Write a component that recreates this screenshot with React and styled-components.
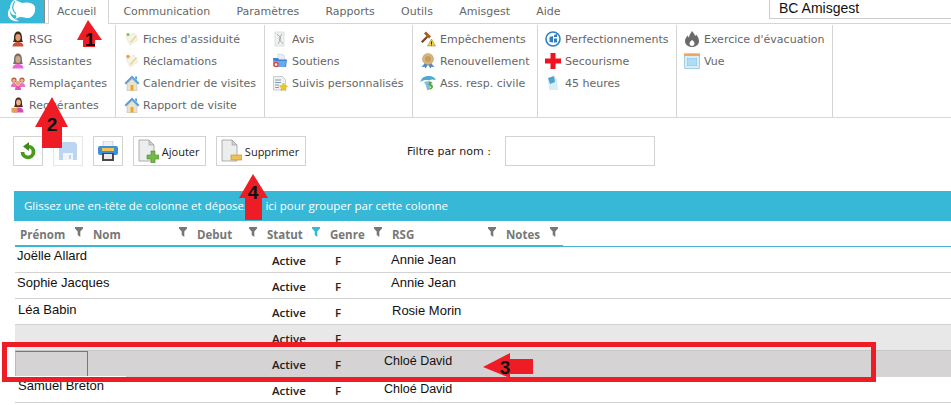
import React from 'react';
import styled, { createGlobalStyle } from 'styled-components';

const GlobalStyle = createGlobalStyle`
  html, body {
    margin: 0;
    padding: 0;
    background: #fff;
  }
`;

const Page = styled.div`
  position: relative;
  width: 951px;
  height: 405px;
  overflow: hidden;
  font-family: "DejaVu Sans", Verdana, sans-serif;
`;

const TabBar = styled.div`
  display: flex;
  height: 23px;
  border-bottom: 1px solid #d4d4d4;
`;

const Logo = styled.div`
  width: 45px;
  height: 23px;
  background: #37b8d6;
  margin-right: 3px;
  border-right: 1px solid #888;
  box-sizing: border-box;
  overflow: hidden;
`;

const Tab = styled.div`
  padding: ${props => (props.$active ? '0 12px 0 8px' : '0 13.15px')};
  height: ${props => (props.$active ? '24px' : '23px')};
  line-height: 23px;
  font-size: 11px;
  color: #666;
  background: #fff;
  margin-right: ${props => (props.$active ? '1px' : '0')};
  border-left: ${props => (props.$active ? '1px solid #d4d4d4' : 'none')};
  border-right: ${props => (props.$active ? '1px solid #d4d4d4' : 'none')};
  white-space: nowrap;
`;

const Account = styled.div`
  margin-left: auto;
  width: 182px;
  height: 19px;
  box-sizing: border-box;
  padding-left: 9px;
  border-left: 1px solid #ccc;
  border-bottom: 1px solid #ccc;
  font-family: "Liberation Sans", Arial, sans-serif;
  font-size: 14px;
  line-height: 17px;
  color: #111;
`;

const Ribbon = styled.div`
  display: flex;
  height: 94px;
  box-sizing: border-box;
  padding-top: 1px;
  border-bottom: 1px solid #d8d8d8;
`;

const RibbonGroup = styled.div`
  width: ${props => props.$width}px;
  box-sizing: border-box;
  padding: 3px 0 0 ${props => props.$pad}px;
  border-right: 1px solid #d4d4d4;
`;

const RibbonItem = styled.div`
  display: flex;
  align-items: center;
  height: 22px;
  font-size: 11px;
  color: #666;
  white-space: nowrap;
`;

const IconSlot = styled.span`
  display: flex;
  width: ${props => props.$width || 20}px;
  flex: none;
`;

const Toolbar = styled.div`
  display: flex;
  align-items: center;
  height: 30px;
  margin-top: 18px;
  padding-left: 13px;
`;

const ToolButton = styled.div`
  display: flex;
  align-items: center;
  justify-content: ${props => (props.$label ? 'flex-start' : 'center')};
  width: ${props => props.$width}px;
  height: 30px;
  box-sizing: border-box;
  margin-right: ${props => props.$gap}px;
  padding-left: ${props => (props.$label ? '4px' : '0')};
  border: 1px solid ${props => (props.$disabled ? '#e6e6e6' : '#d2d2d2')};
  font-family: "Open Sans", sans-serif;
  font-size: 11px;
  color: #222;
`;

const FilterLabel = styled.label`
  margin-left: 101px;
  width: 98px;
  font-size: 11px;
  color: #222;
  white-space: nowrap;
`;

const FilterInput = styled.div`
  width: 150px;
  height: 30px;
  box-sizing: border-box;
  border: 1px solid #d2d2d2;
`;

const GroupBar = styled.div`
  margin: 25px 0 0 14px;
  height: 30px;
  padding-left: 10px;
  background: #37b8d6;
  color: #fff;
  font-family: "Open Sans", sans-serif;
  font-size: 11.5px;
  line-height: 30px;
  white-space: nowrap;
`;

const HeaderRow = styled.div`
  display: grid;
  grid-template-columns: 73px 104px 70px 63px 62px 114px 62px 1fr;
  margin-left: 15px;
  height: 25px;
  border-bottom: 1px solid #45b1cc;
  position: relative;
  &::after {
    content: '';
    position: absolute;
    left: 0;
    bottom: -1px;
    width: 548px;
    height: 2px;
    background: #37b8d6;
  }
`;

const HeaderCell = styled.div`
  display: flex;
  align-items: center;
  justify-content: space-between;
  padding: 1px 5px 0 5px;
  font-family: "Open Sans", sans-serif;
  font-weight: 700;
  font-size: 11.5px;
  color: #777;
  white-space: nowrap;
  svg {
    margin-bottom: 4px;
  }
`;

const Row = styled.div`
  display: grid;
  grid-template-columns: 73px 104px 70px 63px 58px 1fr;
  margin-left: 15px;
  height: 26px;
  box-sizing: border-box;
  border-bottom: ${props => (props.$open ? 'none' : `1px solid ${props.$line || '#d2d2d2'}`)};
  background: ${props => props.$bg || '#fff'};
  font-family: "Liberation Sans", Arial, sans-serif;
  font-size: 13px;
  color: #111;
`;

const NameCell = styled.div`
  padding: ${props => props.$top}px 0 0 ${props => props.$left}px;
  line-height: 15px;
  font-size: ${props => (props.$small ? '12.5px' : '13px')};
  white-space: nowrap;
`;

const StatusCell = styled.div`
  padding: 6px 0 0 10px;
  line-height: 15px;
  font-family: "Open Sans", sans-serif;
  font-weight: 600;
  font-size: 11.5px;
  color: #222;
`;

const EditBox = styled.div`
  position: absolute;
  left: 15px;
  top: 351px;
  width: 73px;
  height: 25px;
  box-sizing: border-box;
  border-top: 1px solid #777;
  border-right: 1px solid #777;
  border-left: 1px solid #bbb;
`;

const EditUnderline = styled.div`
  position: absolute;
  left: 15px;
  top: 376px;
  width: 111px;
  height: 1px;
  background: #fff;
`;

const Highlight = styled.div`
  position: absolute;
  left: 2px;
  top: 342px;
  width: 874px;
  height: 40px;
  box-sizing: border-box;
  border: 5px solid #ee1c25;
`;

const Callout = styled.svg`
  position: absolute;
  left: 0;
  top: 0;
  width: 951px;
  height: 405px;
  pointer-events: none;
  text {
    font-family: "Liberation Sans", Arial, sans-serif;
    font-weight: 700;
    font-size: 19px;
    fill: #111;
    text-anchor: middle;
  }
`;

const Svg = ({ size = 16, children }) => (
  <svg width={size} height={size} viewBox="0 0 16 16">{children}</svg>
);

const Woman = ({ hair, skin, body }) => (
  <Svg>
    <path d="M4 7C4 2 6 .5 8 .5S12 2 12 7c0 2 .5 3 1 4H3c.5-1 1-2 1-4z" fill={hair} />
    <ellipse cx="8" cy="6.5" rx="2.6" ry="3.4" fill={skin} />
    <path d="M2.5 15.5c0-3 2-4.5 5.5-4.5s5.500 1.500 5.500 4.500z" fill={body} />
  </Svg>
);

const Group = () => (
  <Svg>
    <circle cx="4" cy="5" r="2.6" fill="#a8583c" />
    <circle cx="12" cy="5" r="2.600" fill="#a8583c" />
    <circle cx="4" cy="5.400" r="1.700" fill="#f2b48c" />
    <circle cx="12" cy="5.400" r="1.700" fill="#f2b48c" />
    <path d="M1 12c0-3 1-4 3-4s3 1 3 4zM9 12c0-3 1-4 3-4s3 1 3 4z" fill="#ee6fc0" />
    <circle cx="8" cy="8" r="2.200" fill="#e9a77e" />
    <path d="M5 15c0-3 1-4.500 3-4.500s3 1.500 3 4.500z" fill="#e455b0" />
  </Svg>
);

const Requester = () => (
  <Svg>
    <path d="M5 6c0-4 1.500-5.500 3.500-5.500S12 2 12 6c0 2 .5 3 1 4H4c.5-1 1-2 1-4z" fill="#4a2c20" />
    <ellipse cx="8.500" cy="5.500" rx="2.300" ry="3" fill="#f0b28a" />
    <path d="M3 15.500c0-3 2-5 5.500-5s5 2 5 5z" fill="#d94bb4" />
    <path d="M1.500 11h6v4.500h-6z" fill="#e8a050" />
  </Svg>
);

const Sheet = ({ mark, markColor }) => (
  <Svg>
    <path d="M2 6L10 2l4 7-8 5z" fill="#f4f3e6" stroke="#e4e2d2" strokeWidth=".6" />
    <path d="M6 11l6-7 1 1-6 7z" fill="#e8d28a" />
    <circle cx="4" cy="3.500" r={mark} fill={markColor} />
  </Svg>
);

const House = () => (
  <Svg>
    <path d="M8 .5L.5 8l1.500 1.500L8 3.500l6 6L15.500 8z" fill="#5b9fd8" />
    <path d="M3 9l5-5 5 5v6.500H3z" fill="#e9e4d2" stroke="#b9b19a" strokeWidth=".5" />
    <path d="M6.500 10h3v5.500h-3z" fill="#f0a81e" />
    <path d="M11 1.500h2v3.500l-2-2z" fill="#5b9fd8" />
  </Svg>
);

const Checklist = () => (
  <Svg>
    <path d="M3 1h9v14H3z" fill="#f1f1f1" stroke="#cfcfcf" strokeWidth=".6" />
    <path d="M5 3l4 4-3 6M10 3l-3 5 4 5" fill="none" stroke="#9aa7b0" strokeWidth=".9" />
  </Svg>
);

const Folder = () => (
  <Svg>
    <path d="M6 1l6 1 1 5H6z" fill="#e8eef5" stroke="#b9c7d6" strokeWidth=".5" />
    <path d="M1 5h5l1 1.500h8L14 14H2z" fill="#3f83d6" />
    <path d="M1 8h13l-1 6H2z" fill="#6aa9ea" />
    <circle cx="4" cy="11.500" r="2.700" fill="#e24b3b" />
    <circle cx="4" cy="11.500" r="1.200" fill="#fff" />
  </Svg>
);

const StarList = () => (
  <Svg>
    <path d="M1.500 1.500h9l3 3V15h-12z" fill="#eef0f2" stroke="#a9b1b9" strokeWidth=".6" />
    <path d="M3 5h6M3 7.500h6M3 10h4M3 12.500h4" stroke="#7f93a8" strokeWidth=".9" />
    <path d="M11.500 8l1.300 2.600 2.700.4-2 1.900.5 2.800-2.500-1.300L9 15.700l.5-2.800-2-1.900 2.700-.4z" fill="#f5c518" stroke="#c99a10" strokeWidth=".4" />
  </Svg>
);

const Gavel = () => (
  <Svg>
    <path d="M6 .5l5 5-2 2-5-5z" fill="#a85a28" />
    <path d="M6.500 5L1 10.500 2.500 12 8 6.500z" fill="#7a3f1c" />
    <path d="M11.500 8l4 7h-8z" fill="#f5d33a" stroke="#8a7a20" strokeWidth=".5" />
    <path d="M11 10.500h1v2.500h-1zM11 13.500h1v1h-1z" fill="#222" />
  </Svg>
);

const Medal = () => (
  <Svg>
    <path d="M5 10l-3.500 4 3-.3 1 1.800 3-4.500zM11 10l3.500 4-3-.3-1 1.800-3-4.500z" fill="#4f89c9" />
    <circle cx="8" cy="6" r="5.500" fill="#d7b57c" stroke="#b08f58" strokeWidth=".5" />
    <circle cx="8" cy="6" r="3" fill="#c79d5c" />
  </Svg>
);

const Shield = () => (
  <Svg>
    <path d="M.5 7C1 3 4.500 1 8.500 1S15.500 3 15.500 5c-3-1-5-.500-6.500.500C7 4.500 3 5 .5 7z" fill="#4fa9cf" />
    <path d="M4 7c2-1 5-1 7.500 0-1 2-2 6-2 8H7c0-2-1.500-6-3-8z" fill="#7cc1db" />
    <path d="M9.500 6.500c2 0 3 1 3 2h-2c.5 1 2.500 1 2.500 3s-1.500 3-3.500 3v-1.500c1 0 1.500-.5 1.500-1s-2.500-1-2.500-3 1-2.500 1-2.500z" fill="#5fa83a" />
  </Svg>
);

const Badge = () => (
  <Svg>
    <circle cx="8" cy="8" r="7" fill="#fff" stroke="#2f7fc4" strokeWidth="1.600" />
    <path d="M4.500 6L8 5v6.500L4.500 11z" fill="#2f7fc4" />
    <path d="M9 4l3-1v3H9zM9 7.500h3v4L9 11.500z" fill="#2f7fc4" />
  </Svg>
);

const RedCross = () => (
  <Svg>
    <path d="M5.500 0h5v5.500H16v5h-5.500V16h-5v-5.500H0v-5h5.500z" fill="#ee1320" />
  </Svg>
);

const Note = () => (
  <Svg>
    <path d="M3 3l6-2 3 3 1 11H4z" fill="#d5eef5" />
    <path d="M3 3l6-2 1 6-5 2z" fill="#4fa3d1" />
  </Svg>
);

const Flame = () => (
  <Svg>
    <path d="M8 0c1 2 3 3 3 5 1-.5 1-1.500 1-1.500 2 2 3 4.500 3 6.500 0 3.500-3 6-7 6s-7-2.500-7-6c0-2.500 1.500-4 2.500-5.500C4 5.500 4.500 6 5 6.500 5 4 7 2 8 0z" fill="#6a6a6a" />
    <path d="M8 9c1.500 1 2.500 2 2.500 3.500S9.500 15 8 15s-2.500-1-2.500-2.500S7 10 8 9z" fill="#fff" />
  </Svg>
);

const CalendarGrid = () => (
  <Svg>
    <path d="M.5 1h15v14.500H.5z" fill="#d7eefa" stroke="#9fd0e8" />
    <path d="M0 .5h16V3H0z" fill="#f3a65a" />
    <path d="M3 5h10v8H3z" fill="#8cc6ee" />
    <path d="M5 5v8M7 5v8M9 5v8M11 5v8M3 7h10M3 9h10M3 11h10" stroke="#d7eefa" strokeWidth=".6" />
  </Svg>
);

const Reload = () => (
  <svg width="20" height="18" viewBox="0 0 20 18">
    <path d="M11 4.500a5.500 5.500 0 1 1-6.500 5.500" fill="none" stroke="#4b9a1e" strokeWidth="3.800" />
    <path d="M11 0v9L5 4.500z" fill="#3f8a18" />
  </svg>
);

const Floppy = () => (
  <svg width="20" height="20" viewBox="0 0 20 20">
    <path d="M1 1h16l2 2v16H1z" fill="#bcd5f2" />
    <path d="M5 12h10v7H5z" fill="#f2f5f9" />
    <path d="M11 14h2v4h-2z" fill="#bcd5f2" />
  </svg>
);

const Printer = () => (
  <svg width="20" height="20" viewBox="0 0 20 20">
    <path d="M5 0h10v6H5z" fill="#eef2f5" stroke="#9fb0bf" strokeWidth=".5" />
    <rect x="0" y="5" width="20" height="9" rx="2" fill="#3e8fd8" />
    <path d="M4 7h12v3H4z" fill="#f3c24f" />
    <path d="M4 12h12v8H4z" fill="#4a4a4a" />
    <path d="M6 13h8v5H6z" fill="#e8e8e8" />
  </svg>
);

const Doc = ({ minus }) => (
  <svg width="21" height="24" viewBox="0 0 21 24">
    <path d="M1 1h10l5 5v16H1z" fill="#eceded" stroke="#9c9c9c" strokeWidth=".8" />
    <path d="M11 1v5h5z" fill="#cfcfcf" stroke="#9c9c9c" strokeWidth=".6" />
    {minus
      ? <path d="M10 16h11v5H10z" fill="#f0c050" stroke="#c48a20" strokeWidth=".6" />
      : <path d="M13 12h4v4h4v4h-4v4h-4v-4H9v-4h4z" fill="#76b84a" stroke="#4f8a2a" strokeWidth=".6" />}
  </svg>
);

const Funnel = ({ color = '#777' }) => (
  <svg width="8" height="10" viewBox="0 0 8 10">
    <path d="M0 0h8v1.500L5.300 4.500V10L2.700 8V4.500L0 1.500z" fill={color} />
  </svg>
);

const BrandMark = () => (
  <svg width="44" height="23" viewBox="0 0 44 23">
    <path d="M14 0c3 0 5 2 8 3 4-1 11-1 13 4 1 5-2 10-6 11-3 .5-5-1-8-1-3 0-5 2-7 3 2-2 3-3 2-5-3 1-6-2-6-6 0-4 1-7 4-9z" fill="#fff" />
    <path d="M10 8c-1 6 2 11 9 13-5 1-10-1-11-6-.5-3 .5-5 2-7z" fill="#fff" />
    <path d="M15 1c-3 4-3 9 1 13" fill="none" stroke="#37b8d6" strokeWidth="1.200" />
  </svg>
);

const tabs = ['Communication', 'Paramètres', 'Rapports', 'Outils', 'Amisgest', 'Aide'];

const ribbon = [
  {
    width: 116, pad: 10, slot: 19, items: [
      [<Woman hair="#3b2a20" skin="#e39a6c" body="#c9503c" />, 'RSG'],
      [<Woman hair="#77706a" skin="#cfa88a" body="#ee66dd" />, 'Assistantes'],
      [<Group />, 'Remplaçantes'],
      [<Requester />, 'Requérantes'],
    ],
  },
  {
    width: 149, pad: 8, slot: 19, items: [
      [<Sheet mark={1.6} markColor="#7cc44a" />, "Fiches d'assiduité"],
      [<Sheet mark={1.8} markColor="#f0a030" />, 'Réclamations'],
      [<House />, 'Calendrier de visites'],
      [<House />, 'Rapport de visite'],
    ],
  },
  {
    width: 148, pad: 7, slot: 20, items: [
      [<Checklist />, 'Avis'],
      [<Folder />, 'Soutiens'],
      [<StarList />, 'Suivis personnalisés'],
    ],
  },
  {
    width: 125, pad: 7, slot: 20, items: [
      [<Gavel />, 'Empêchements'],
      [<Medal />, 'Renouvellement'],
      [<Shield />, 'Ass. resp. civile'],
    ],
  },
  {
    width: 139, pad: 7, slot: 20, items: [
      [<Badge />, 'Perfectionnements'],
      [<RedCross />, 'Secourisme'],
      [<Note />, '45 heures'],
    ],
  },
  {
    width: 156, pad: 7, slot: 20, items: [
      [<Flame />, "Exercice d'évacuation"],
      [<CalendarGrid />, 'Vue'],
    ],
  },
];

const headers = [
  ['Prénom'], ['Nom'], ['Debut'], ['Statut', '#37b8d6'], ['Genre'], ['RSG'], ['Notes'],
];

const rows = [
  { name: 'Joëlle Allard', nameTop: 1, nameLeft: 2, rsg: 'Annie Jean', rsgTop: 5, rsgLeft: 8 },
  { name: 'Sophie Jacques', nameTop: 2, nameLeft: 2, rsg: 'Annie Jean', rsgTop: 2, rsgLeft: 8 },
  { name: 'Léa Babin', nameTop: 3, nameLeft: 3, rsg: 'Rosie Morin', rsgTop: 4, rsgLeft: 9 },
  { bg: '#e8e8e8', line: '#c8c8c8', rsgTop: 0, rsgLeft: 0, nameTop: 0, nameLeft: 0 },
  { bg: '#d6d3d4', open: true, rsg: 'Chloé David', small: true, rsgTop: 3, rsgLeft: 1, nameTop: 0, nameLeft: 0 },
  { name: 'Samuel Breton', nameTop: 1, nameLeft: 3, rsg: 'Chloé David', small: true, rsgTop: 5, rsgLeft: 1 },
];

const App = () => {
  return (
    <Page>
      <GlobalStyle />
      <TabBar>
        <Logo><BrandMark /></Logo>
        <Tab $active>Accueil</Tab>
        {tabs.map(tab => <Tab key={tab}>{tab}</Tab>)}
        <Account>BC Amisgest</Account>
      </TabBar>

      <Ribbon>
        {ribbon.map((group, i) => (
          <RibbonGroup key={i} $width={group.width} $pad={group.pad}>
            {group.items.map(([icon, label]) => (
              <RibbonItem key={label}>
                <IconSlot $width={group.slot}>{icon}</IconSlot>
                {label}
              </RibbonItem>
            ))}
          </RibbonGroup>
        ))}
      </Ribbon>

      <Toolbar>
        <ToolButton $width={30} $gap={10}><Reload /></ToolButton>
        <ToolButton $width={30} $gap={10} $disabled><Floppy /></ToolButton>
        <ToolButton $width={30} $gap={10}><Printer /></ToolButton>
        <ToolButton $width={73} $gap={10} $label><Doc />&nbsp;Ajouter</ToolButton>
        <ToolButton $width={90} $gap={0} $label><Doc minus />&nbsp;Supprimer</ToolButton>
        <FilterLabel>Filtre par nom :</FilterLabel>
        <FilterInput />
      </Toolbar>

      <GroupBar>Glissez une en-tête de colonne et déposez-la ici pour grouper par cette colonne</GroupBar>

      <HeaderRow>
        {headers.map(([label, color]) => (
          <HeaderCell key={label}>{label}<Funnel color={color} /></HeaderCell>
        ))}
      </HeaderRow>

      {rows.map((row, i) => (
        <Row key={i} $bg={row.bg} $open={row.open} $line={row.line}>
          <NameCell $top={row.nameTop} $left={row.nameLeft}>{row.name}</NameCell>
          <div />
          <div />
          <StatusCell>Active</StatusCell>
          <StatusCell>F</StatusCell>
          <NameCell $top={row.rsgTop} $left={row.rsgLeft} $small={row.small}>{row.rsg}</NameCell>
        </Row>
      ))}

      <EditBox />
      <EditUnderline />
      <Highlight />

      <Callout viewBox="0 0 951 405">
        <path d="M88 20L102 40H95V47H83V40H77z" fill="#ee1c25" />
        <text x="90" y="46">1</text>
        <path d="M52 97L68 127H62V148H42V127H35z" fill="#ee1c25" />
        <text x="52" y="131">2</text>
        <path d="M483 367L510 353V359H533V374H510V378z" fill="#ee1c25" />
        <text x="505" y="374">3</text>
        <path d="M253 174L268 198H262V220H245V198H239z" fill="#ee1c25" />
        <text x="253" y="199">4</text>
      </Callout>
    </Page>
  );
};

export default App;
